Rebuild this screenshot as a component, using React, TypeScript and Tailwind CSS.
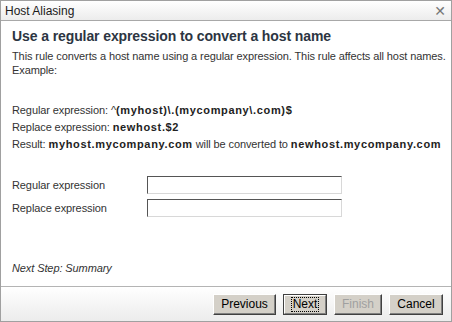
import React from 'react';

const font = { fontFamily: 'Tahoma, "Liberation Sans", "DejaVu Sans", sans-serif' };

function WinButton({
  label,
  isDefault = false,
  disabled = false,
  width,
}: {
  label: string;
  isDefault?: boolean;
  disabled?: boolean;
  width: string;
}) {
  if (isDefault) {
    return (
      <div className={`${width} h-[21px] border border-[#404040] bg-[#d4d0c8]`}>
        <div className="flex h-full w-full items-center justify-center border-t border-l border-t-white border-l-white border-r border-b border-r-[#808080] border-b-[#808080]">
          <span className="border border-dotted border-black px-[1px] leading-[13px] text-[12px] text-black">
            {label}
          </span>
        </div>
      </div>
    );
  }
  return (
    <div
      className={`${width} flex h-[21px] items-center justify-center border border-t-white border-l-white border-r-[#404040] border-b-[#404040] bg-[#d4d0c8] text-[12px] shadow-[inset_-1px_-1px_0_#808080] ${
        disabled ? 'text-[#a0a0a0]' : 'text-black'
      }`}
    >
      {label}
    </div>
  );
}

function B({ children }: { children: React.ReactNode }) {
  return <b className="tracking-[0.65px] text-[#222]">{children}</b>;
}

export default function App() {
  return (
    <div className="h-[322px] w-[452px] bg-white" style={font}>
      <div className="flex h-full w-full flex-col border border-[#a0a0a0]">
        {/* title bar */}
        <div className="flex h-[20px] items-center justify-between border-b border-[#a8a8a8] bg-gradient-to-b from-white to-[#ececec] pl-[4px] pr-[5px]">
          <span className="text-[12px] text-[#1a1a1a]">Host Aliasing</span>
          <span className="text-[14px] leading-none text-[#777]">✕</span>
        </div>

        {/* body */}
        <div className="flex flex-1 flex-col px-[11px] text-[11px] tracking-[-0.1px] text-[#333]">
          <h1 className="mt-[5px] text-[14px] font-bold tracking-[-0.1px] text-[#2c3542]">
            Use a regular expression to convert a host name
          </h1>
          <p className="mt-[2px] whitespace-nowrap leading-[14px]">
            This rule converts a host name using a regular expression. This rule affects all host names.
            <br />
            Example:
          </p>

          <div className="mt-[26px] flex flex-col gap-[3px] whitespace-nowrap leading-[14px]">
            <div>
              Regular expression: ^<B>(myhost)\.(mycompany\.com)$</B>
            </div>
            <div>
              Replace expression: <B>newhost.$2</B>
            </div>
            <div>
              Result: <B>myhost.mycompany.com</B> will be converted to <B>newhost.mycompany.com</B>
            </div>
          </div>

          <div className="mt-[25px] flex flex-col gap-[5px]">
            <div className="flex items-center">
              <span className="w-[135px]">Regular expression</span>
              <div className="h-[18px] w-[195px] border border-t-[#555] border-l-[#555] border-r-[#d8d8d8] border-b-[#d8d8d8] bg-white" />
            </div>
            <div className="flex items-center">
              <span className="w-[135px]">Replace expression</span>
              <div className="h-[18px] w-[195px] border border-t-[#555] border-l-[#555] border-r-[#d8d8d8] border-b-[#d8d8d8] bg-white" />
            </div>
          </div>

          <div className="mt-auto mb-[10px] italic text-[#333]">Next Step: Summary</div>
        </div>

        {/* footer */}
        <div className="flex h-[35px] items-center justify-end gap-[7px] border-t border-[#b4b4b4] bg-gradient-to-b from-white to-[#ececec] pr-[8px]">
          <WinButton label="Previous" width="w-[63px]" />
          <WinButton label="Next" width="w-[44px]" isDefault />
          <WinButton label="Finish" width="w-[48px]" disabled />
          <WinButton label="Cancel" width="w-[54px]" />
        </div>
      </div>
    </div>
  );
}
